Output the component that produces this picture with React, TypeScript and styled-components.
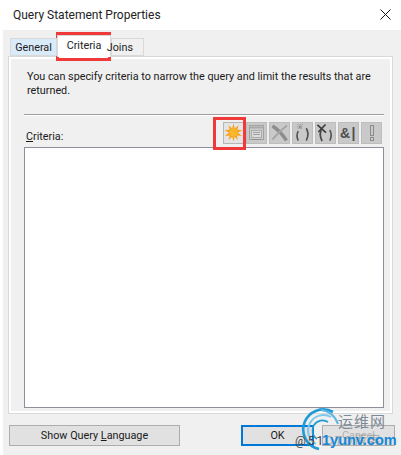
import styled, { createGlobalStyle } from "styled-components";

const GlobalStyle = createGlobalStyle`
  html, body {
    margin: 0;
    padding: 0;
    background: #ffffff;
  }
  #root {
    width: 401px;
    height: 455px;
    overflow: hidden;
  }
`;

function SunIcon() {
  return (
    <svg width="19" height="19" viewBox="0 0 19 19">
      <path
        d="M9.5 0.5 L10.8 5.4 L14.5 2.2 L13.4 6.6 L18.5 7.6 L13.8 9.6 L18 13 L13 12.6 L13.8 17 L10.6 13.8 L9.5 18.5 L8.2 13.8 L4.6 17 L5.6 12.6 L0.8 13 L5 9.6 L0.5 7.6 L5.6 6.6 L4.5 2.2 L8.2 5.4 Z"
        fill="#f6a21e"
      />
      <circle cx="9.5" cy="9.5" r="4" fill="#fbb72e" />
    </svg>
  );
}

function ListIcon() {
  return (
    <svg width="17" height="17" viewBox="0 0 17 17" fill="none" stroke="#a2a2a2">
      <rect x="1.5" y="1.5" width="14" height="14" fill="#cdcdcd" />
      <path d="M1.5 3.5 H15.5" strokeWidth="2" stroke="#a8a8a8" />
      <rect x="3.5" y="6.5" width="10" height="7" fill="#dcdcdc" stroke="#ababab" />
      <path d="M5 8.5 H12 M5 10.5 H12" stroke="#a0a0a0" />
      <path d="M4 15.5 H13" stroke="#8f8f8f" />
    </svg>
  );
}

function CrossIcon() {
  return (
    <svg width="19" height="18" viewBox="0 0 19 18" fill="none">
      <path d="M2.5 2 C7 5 13 11 16.5 16.5" stroke="#8d8d8d" strokeWidth="3.4" />
      <path d="M17 1.5 C12 5 6 11 2.5 15.5" stroke="#a4a4a4" strokeWidth="2" />
    </svg>
  );
}

function AddParensIcon() {
  return (
    <svg width="20" height="20" viewBox="0 0 20 20" fill="none">
      <path
        d="M7.5 0.5 V6.5 M4.5 3.5 H10.5 M5 1 L10 6 M10 1 L5 6"
        stroke="#7a7a7a"
        strokeDasharray="1 1"
      />
      <path d="M5.5 8 Q3 12.5 5.5 18" stroke="#505050" strokeWidth="1.7" />
      <path d="M14 5 Q17.5 11 14 18" stroke="#505050" strokeWidth="1.7" />
    </svg>
  );
}

function RemoveParensIcon() {
  return (
    <svg width="20" height="20" viewBox="0 0 20 20" fill="none">
      <path d="M1.5 1.5 L10.5 9.5 M10 1 L2.5 9" stroke="#3a3a3a" strokeWidth="1.7" />
      <path d="M5.5 7 Q3 12.5 6.5 18.5" stroke="#464646" strokeWidth="1.8" />
      <path d="M14.5 7 Q17.5 12 14.5 18" stroke="#505050" strokeWidth="1.7" />
    </svg>
  );
}

function BangIcon() {
  return (
    <svg width="10" height="18" viewBox="0 0 10 18" fill="none" stroke="#8c8c8c">
      <rect x="3.5" y="1.5" width="3" height="10" />
      <rect x="3.5" y="13.5" width="3" height="3" />
    </svg>
  );
}

export default function App() {
  return (
    <>
      <GlobalStyle />
      <Dialog>
        <TitleBar>
          <Title>Query Statement Properties</Title>
          <CloseIcon width="11" height="11" viewBox="0 0 11 11">
            <path d="M0.5 0.5 L10.5 10.5 M10.5 0.5 L0.5 10.5" stroke="#111" fill="none" />
          </CloseIcon>
        </TitleBar>
        <Body>
          <TabStrip>
            <Tab>General</Tab>
            <Tab active>Criteria</Tab>
            <Tab last>Joins</Tab>
          </TabStrip>
          <Panel>
            <Intro>
              You can specify criteria to narrow the query and limit the results that are returned.
            </Intro>
            <Separator />
            <CriteriaHeader>
              <FieldLabel>
                <u>C</u>riteria:
              </FieldLabel>
              <Toolbar>
                <ToolButton active><SunIcon /></ToolButton>
                <ToolButton><ListIcon /></ToolButton>
                <ToolButton><CrossIcon /></ToolButton>
                <ToolButton><AddParensIcon /></ToolButton>
                <ToolButton><RemoveParensIcon /></ToolButton>
                <ToolButton><AndOr>&amp;|</AndOr></ToolButton>
                <ToolButton><BangIcon /></ToolButton>
              </Toolbar>
            </CriteriaHeader>
            <CriteriaList />
          </Panel>
          <Footer>
            <WideButton>
              Show Query <u>L</u>anguage
            </WideButton>
            <FooterRight>
              <OkButton>OK</OkButton>
              <CancelButton>Cancel</CancelButton>
            </FooterRight>
          </Footer>
        </Body>
        <TabHighlight />
        <ToolHighlight />
        <Watermark>
          <WatermarkRings width="44" height="46" viewBox="0 0 44 46" fill="none">
            <path d="M36 5 A20 20 0 1 0 22 42" stroke="#1f9ad6" strokeWidth="2.6" />
            <path d="M34 10 A15 15 0 1 0 19 37" stroke="#7cc8ec" strokeWidth="2" />
            <path d="M31 15 A10 10 0 1 0 20 32" stroke="#1f9ad6" strokeWidth="1.6" />
            <path d="M24 3 A20 20 0 0 1 41 17" stroke="#5fb5e2" strokeWidth="2" />
          </WatermarkRings>
          <WatermarkCn>运维网</WatermarkCn>
          <WatermarkBack>
            @51<WatermarkFaint>CTO博客</WatermarkFaint>
          </WatermarkBack>
          <WatermarkBlue>1yunv.com</WatermarkBlue>
        </Watermark>
      </Dialog>
    </>
  );
}

const Dialog = styled.div`
  position: relative;
  width: 401px;
  height: 455px;
  background: #ffffff;
  font-family: Roboto, "Liberation Sans", sans-serif;
  font-size: 10.8px;
  color: #1a1a1a;
  overflow: hidden;
`;

const TitleBar = styled.div`
  height: 30px;
  display: flex;
  align-items: center;
  justify-content: space-between;
  padding: 0 10px 1px 13px;
  box-sizing: border-box;
`;

const Title = styled.div`
  font-size: 12px;
  color: #222222;
`;

const CloseIcon = styled.svg`
  display: block;
`;

const Body = styled.div`
  margin-left: 3px;
  height: 425px;
  background: #f0f0f0;
  padding: 8px 8px 0 5px;
  box-sizing: border-box;
`;

const TabStrip = styled.div`
  display: flex;
  align-items: flex-end;
  height: 18px;
  padding-left: 2px;
  position: relative;
  z-index: 1;
`;

const Tab = styled.div<{ active?: boolean; last?: boolean }>`
  box-sizing: border-box;
  display: flex;
  align-items: center;
  justify-content: ${(p) => (p.last ? "flex-end" : "center")};
  height: ${(p) => (p.active ? "22px" : "18px")};
  width: ${(p) => (p.active ? "54px" : p.last ? "33px" : "47px")};
  padding-right: ${(p) => (p.last ? "10px" : "0")};
  padding-bottom: ${(p) => (p.active ? "3px" : "0")};
  margin-bottom: ${(p) => (p.active ? "-1px" : "0")};
  background: ${(p) => (p.active ? "#ffffff" : p.last ? "#f0f0f0" : "#d9ebf9")};
  border: 1px solid #d9d9d9;
  border-bottom: ${(p) => (p.active ? "none" : "1px solid #d9d9d9")};
  color: #222222;
`;

const Panel = styled.div`
  box-sizing: border-box;
  height: 358px;
  border: 1px solid #d9d9d9;
  box-shadow: inset 2px 2px 0 #ffffff, inset -2px -2px 0 #ffffff;
  padding: 13px 8px 5px 15px;
  display: flex;
  flex-direction: column;
`;

const Intro = styled.p`
  margin: 0 0 0 3px;
  width: 352px;
  line-height: 14px;
  height: 29px;
`;

const Separator = styled.div`
  margin-top: 15px;
  height: 1px;
  background: #a0a0a0;
  box-shadow: 0 1px 0 #ffffff;
`;

const CriteriaHeader = styled.div`
  display: flex;
  align-items: flex-end;
  justify-content: space-between;
  margin-top: 7px;
  height: 22px;
`;

const FieldLabel = styled.span`
  margin-left: 2px;
  line-height: 14px;
`;

const Toolbar = styled.div`
  display: flex;
  gap: 2px;
  margin-right: 2px;
`;

const ToolButton = styled.div<{ active?: boolean }>`
  box-sizing: border-box;
  width: 21px;
  height: 22px;
  display: flex;
  align-items: center;
  justify-content: center;
  border: 1px solid ${(p) => (p.active ? "#b5b5b5" : "#bdbdbd")};
  background: ${(p) => (p.active ? "#e4e4e4" : "#c9c9c9")};
`;

const AndOr = styled.span`
  font-family: "Liberation Sans", Arial, sans-serif;
  font-weight: 700;
  font-size: 14px;
  color: #505050;
  letter-spacing: 1.5px;
`;

const CriteriaList = styled.div`
  margin-top: 3px;
  height: 263px;
  background: #ffffff;
  border: 1px solid #8e8f9a;
  box-sizing: border-box;
`;

const Footer = styled.div`
  display: flex;
  justify-content: space-between;
  align-items: center;
  margin-top: 11px;
  padding-left: 1px;
`;

const FooterRight = styled.div`
  display: flex;
  gap: 8px;
  margin-right: -2px;
`;

const WideButton = styled.div`
  box-sizing: border-box;
  width: 171px;
  height: 21px;
  display: flex;
  align-items: center;
  justify-content: center;
  white-space: pre;
  background: #e1e1e1;
  border: 1px solid #adadad;
`;

const OkButton = styled.div`
  box-sizing: border-box;
  width: 73px;
  height: 21px;
  display: flex;
  align-items: center;
  justify-content: center;
  background: #e1e1e1;
  border: 2px solid #0078d7;
`;

const CancelButton = styled(OkButton)`
  border: 1px solid #adadad;
  color: #b0b0b0;
`;

const TabHighlight = styled.div`
  position: absolute;
  left: 56px;
  top: 32px;
  width: 55px;
  height: 29px;
  box-sizing: border-box;
  border: 3px solid #f03a3a;
`;

const ToolHighlight = styled.div`
  position: absolute;
  left: 213px;
  top: 117px;
  width: 33px;
  height: 33px;
  box-sizing: border-box;
  border: 3px solid #f03a3a;
`;

const Watermark = styled.div`
  position: absolute;
  left: 297px;
  top: 407px;
  width: 104px;
  height: 48px;
`;

const WatermarkRings = styled.svg`
  position: absolute;
  left: 0;
  top: 0;
`;

const WatermarkCn = styled.div`
  position: absolute;
  left: 41px;
  top: 5px;
  font-family: "Noto Sans CJK SC", sans-serif;
  font-size: 15px;
  line-height: 18px;
  letter-spacing: 1px;
  color: #7d8a94;
  white-space: nowrap;
`;

const WatermarkBack = styled.div`
  position: absolute;
  left: -2px;
  top: 26px;
  font-family: Roboto, "Noto Sans CJK SC", sans-serif;
  font-size: 12px;
  line-height: 16px;
  letter-spacing: 2px;
  color: #444444;
  white-space: nowrap;
`;

const WatermarkFaint = styled.span`
  color: #a8a8a8;
`;

const WatermarkBlue = styled.div`
  position: absolute;
  left: 25px;
  top: 24px;
  font-family: "Liberation Sans", Arial, sans-serif;
  font-size: 14.5px;
  font-weight: 700;
  line-height: 18px;
  color: #1688d6;
  white-space: nowrap;
`;
